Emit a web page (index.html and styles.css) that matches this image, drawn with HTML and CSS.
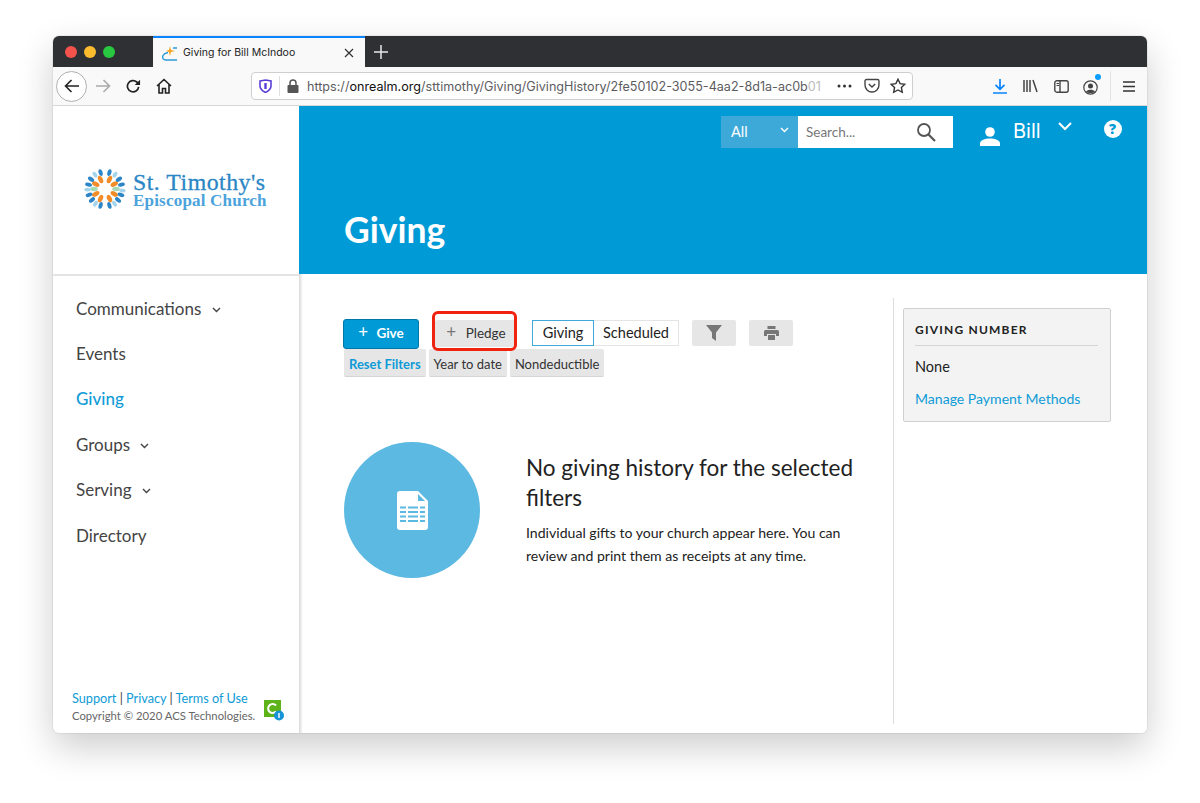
FILE: index.html
```html
<!DOCTYPE html>
<html lang="en">
<head>
    <meta charset="UTF-8">
    <title>Giving for Bill McIndoo</title>
    <link rel="stylesheet" href="styles.css">
</head>
<body>
<div class="window">
    <!-- tab strip -->
    <div class="tabstrip">
        <div class="lights"><i class="red"></i><i class="yellow"></i><i class="green"></i></div>
        <div class="tab">
            <svg class="favicon" width="16" height="16" viewBox="0 0 16 16"><path d="M15 15H4C1 15 0 12.500 1 10.500 1.800 9 3.500 8 6 7.500" fill="none" stroke="#2a9ad6" stroke-width="1.400"/><path d="M8 1l1 4 4 1-4 1-1 4-1-4-3-1 3-1z" fill="#f5a21b"/><path d="M11 3h4" stroke="#2a9ad6" stroke-width="1.400"/></svg>
            <span class="tab-title">Giving for Bill McIndoo</span>
            <svg class="tab-close" width="10" height="10" viewBox="0 0 10 10"><path d="M1 1l8 8M9 1L1 9" stroke="#333" stroke-width="1.200"/></svg>
        </div>
        <svg class="newtab" width="14" height="14" viewBox="0 0 14 14"><path d="M7 0v14M0 7h14" stroke="#e8e8e8" stroke-width="1.500"/></svg>
    </div>

    <!-- browser toolbar -->
    <div class="toolbar">
        <div class="back"><svg width="16" height="16" viewBox="0 0 16 16"><path d="M15 8H1.500M7.500 2L1.500 8l6 6" fill="none" stroke="#222" stroke-width="1.600"/></svg></div>
        <svg class="tb-forward" width="16" height="16" viewBox="0 0 16 16"><path d="M1 8h13.500M8.500 2l6 6-6 6" fill="none" stroke="#aaa" stroke-width="1.600"/></svg>
        <svg class="tb-reload" width="15" height="15" viewBox="0 0 16 16"><path d="M13.500 8.500A6 6 0 1 1 11.500 3.200L14 5" fill="none" stroke="#222" stroke-width="1.800"/><path d="M15 .8v5.700H9.300z" fill="#222"/></svg>
        <svg class="tb-home" width="16" height="16" viewBox="0 0 16 16"><path d="M1 8l7-6.500L15 8M3 6.500V15h3.500v-4.500h3V15H13V6.500" fill="none" stroke="#222" stroke-width="1.600"/></svg>
        <div class="urlbar">
            <svg class="shield" width="13" height="14" viewBox="0 0 13 14"><path d="M1 2l5.500-1L12 2v5c0 3-2.500 5-5.500 6.500C3.500 12 1 10 1 7z" fill="#fff" stroke="#5b3fd6" stroke-width="1.600"/><path d="M6.500 4v6" stroke="#5b3fd6" stroke-width="2.400"/></svg>
            <span class="url-sep"></span>
            <svg class="lock" width="12" height="14" viewBox="0 0 12 14"><path d="M3 6V4a3 3 0 0 1 6 0v2" fill="none" stroke="#555" stroke-width="1.500"/><rect x="0.500" y="6" width="11" height="8" rx="1" fill="#555"/></svg>
            <span class="url"><span class="dim">https://</span>onrealm.org<span class="dim">/sttimothy/Giving/GivingHistory/2fe50102-3055-4aa2-8d1a-ac0b<span class="fade">01</span></span></span>
            <svg class="dots" width="15" height="4" viewBox="0 0 15 4"><circle cx="2" cy="2" r="1.500" fill="#333"/><circle cx="7.500" cy="2" r="1.500" fill="#333"/><circle cx="13" cy="2" r="1.500" fill="#333"/></svg>
            <svg class="pocket" width="16" height="16" viewBox="0 0 16 16"><path d="M1 3a1.500 1.500 0 0 1 1.500-1.500h11A1.500 1.500 0 0 1 15 3v4a7 7 0 0 1-14 0z" fill="none" stroke="#444" stroke-width="1.400"/><path d="M4.800 6L8 9l3.200-3" fill="none" stroke="#444" stroke-width="1.500"/></svg>
            <svg class="star" width="16" height="16" viewBox="0 0 16 16"><path d="M8 1.200l2.100 4.400 4.800.6-3.500 3.300.9 4.800L8 12l-4.300 2.300.9-4.800L1.100 6.200l4.800-.6z" fill="none" stroke="#333" stroke-width="1.400"/></svg>
        </div>
        <div class="tb-right">
            <svg width="14" height="15" viewBox="0 0 14 15"><path d="M7 0v10M2.500 5.800L7 10.300l4.500-4.500M0 14h14" fill="none" stroke="#0a84ff" stroke-width="1.700"/></svg>
            <svg width="15" height="14" viewBox="0 0 15 14"><path d="M1 1v12M4 1v12M7 1v12M10 1l4 12" fill="none" stroke="#444" stroke-width="1.500"/></svg>
            <svg width="15" height="13" viewBox="0 0 15 13"><rect x="0.800" y="0.800" width="13.400" height="11.400" rx="2" fill="none" stroke="#444" stroke-width="1.400"/><path d="M6 1v11" stroke="#444" stroke-width="1.400"/><path d="M2.500 3.500H5M2.500 5.500H5" stroke="#444"/></svg>
            <span class="account">
                <svg width="15" height="15" viewBox="0 0 15 15"><circle cx="7.500" cy="7.500" r="6.700" fill="none" stroke="#444" stroke-width="1.200"/><circle cx="7.500" cy="6" r="2.500" fill="#444"/><path d="M3 11.500c2-2.500 7-2.500 9 0-2 2-7 2-9 0z" fill="#444"/></svg>
                <i class="account-dot"></i>
            </span>
            <span class="tb-sep"></span>
            <svg width="12" height="11" viewBox="0 0 12 11"><path d="M0 1h12M0 5.500h12M0 10h12" stroke="#333" stroke-width="1.500"/></svg>
        </div>
    </div>

    <div class="app">
        <aside class="sidebar">
            <div class="logo">
                <svg class="sunburst" width="42" height="42" viewBox="-21 -21 42 42">
                    <defs>
                        <ellipse id="po" cx="0" cy="-10.500" rx="2.300" ry="4" fill="#f28c28"/>
                        <ellipse id="pb" cx="0" cy="-17" rx="2" ry="3.500" fill="#2a86c8"/>
                        <ellipse id="pl" cx="0" cy="-17.500" rx="1.900" ry="3.200" fill="#a4d3ec"/>
                        <ellipse id="pg" cx="0" cy="-11" rx="2.200" ry="3.800" fill="#a5d9b8"/>
                    </defs>
                    <use href="#po" transform="rotate(25)"/><use href="#po" transform="rotate(62)"/><use href="#po" transform="rotate(118)"/><use href="#po" transform="rotate(155)"/><use href="#po" transform="rotate(205)"/><use href="#po" transform="rotate(242)"/><use href="#po" transform="rotate(298)"/><use href="#po" transform="rotate(335)"/>
                    <use href="#pg" transform="rotate(90)"/><use href="#pg" transform="rotate(270)"/>
                    <use href="#pb" transform="rotate(15)"/><use href="#pl" transform="rotate(35)"/><use href="#pb" transform="rotate(55)"/><use href="#pb" transform="rotate(75)"/><use href="#pl" transform="rotate(95)"/><use href="#pb" transform="rotate(110)"/><use href="#pb" transform="rotate(130)"/><use href="#pl" transform="rotate(147)"/><use href="#pb" transform="rotate(165)"/><use href="#pb" transform="rotate(195)"/><use href="#pl" transform="rotate(213)"/><use href="#pb" transform="rotate(230)"/><use href="#pb" transform="rotate(250)"/><use href="#pl" transform="rotate(268)"/><use href="#pb" transform="rotate(285)"/><use href="#pb" transform="rotate(305)"/><use href="#pl" transform="rotate(325)"/><use href="#pb" transform="rotate(345)"/>
                </svg>
                <div class="logo-text">
                    <div class="logo-name">St. Timothy's</div>
                    <div class="logo-sub">Episcopal Church</div>
                </div>
            </div>
            <nav class="nav">
                <a>Communications <svg class="caret" width="9" height="6" viewBox="0 0 9 6"><path d="M1 1l3.500 3.500L8 1" fill="none" stroke="#444" stroke-width="1.400"/></svg></a>
                <a>Events</a>
                <a class="active">Giving</a>
                <a>Groups <svg class="caret" width="9" height="6" viewBox="0 0 9 6"><path d="M1 1l3.500 3.500L8 1" fill="none" stroke="#444" stroke-width="1.400"/></svg></a>
                <a>Serving <svg class="caret" width="9" height="6" viewBox="0 0 9 6"><path d="M1 1l3.500 3.500L8 1" fill="none" stroke="#444" stroke-width="1.400"/></svg></a>
                <a>Directory</a>
            </nav>
            <div class="side-footer">
                <div class="foot-text">
                    <div class="foot-links"><a>Support</a> | <a>Privacy</a> | <a>Terms of Use</a></div>
                    <div class="copyright">Copyright © 2020 ACS Technologies.</div>
                </div>
                <svg class="acs" width="20" height="22" viewBox="0 0 20 22"><rect x="0" y="0" width="17" height="17" fill="#5fb31a"/><path d="M12 5.500a4.500 4.500 0 1 0 0 6" fill="none" stroke="#fff" stroke-width="2"/><circle cx="15" cy="15.500" r="5" fill="#1793d8"/><path d="M15 13v5" stroke="#fff" stroke-width="1.400"/></svg>
            </div>
        </aside>

        <div class="content">
            <header class="banner">
                <div class="banner-top">
                    <div class="search">
                        <div class="search-scope">All <svg width="9" height="6" viewBox="0 0 9 6"><path d="M1 1l3.500 3.500L8 1" fill="none" stroke="#fff" stroke-width="1.400"/></svg></div>
                        <div class="search-box">
                            <span>Search...</span>
                            <svg width="20" height="20" viewBox="0 0 20 20"><circle cx="8" cy="8" r="6" fill="none" stroke="#555" stroke-width="1.800"/><path d="M12.500 12.500l6.500 6.500" stroke="#555" stroke-width="2.200"/></svg>
                        </div>
                    </div>
                    <svg class="user-icon" width="20" height="20" viewBox="0 0 20 20"><circle cx="10" cy="6" r="4.800" fill="#fff"/><path d="M0 20v-2.500C0 14 5 12.500 10 12.500s10 1.500 10 5V20z" fill="#fff"/></svg>
                    <span class="user-name">Bill</span>
                    <svg class="user-caret" width="14" height="9" viewBox="0 0 14 9"><path d="M1 1l6 6 6-6" fill="none" stroke="#fff" stroke-width="2"/></svg>
                    <span class="help">?</span>
                </div>
                <h1>Giving</h1>
            </header>

            <div class="body">
                <main class="main">
                    <div class="actions">
                        <button class="btn-give"><span class="plus">+</span> Give</button>
                        <div class="pledge-wrap">
                            <button class="btn-pledge"><span class="plus">+</span> Pledge</button>
                            <div class="highlight"></div>
                        </div>
                        <div class="segment">
                            <span class="seg on">Giving</span><span class="seg">Scheduled</span>
                        </div>
                        <button class="icon-btn filter-btn"><svg width="16" height="16" viewBox="0 0 16 16"><path d="M0 0h16L10 7.500V16L6 13V7.500z" fill="#777"/></svg></button>
                        <button class="icon-btn print-btn"><svg width="15" height="14" viewBox="0 0 15 14"><path d="M3.500 0h8v3h-8zM1.500 4h12A1.500 1.500 0 0 1 15 5.500V10h-3V8H3v2H0V5.500A1.500 1.500 0 0 1 1.500 4zM4 9h7v5H4z" fill="#777"/></svg></button>
                    </div>
                    <div class="chips">
                        <span class="chip reset">Reset Filters</span>
                        <span class="chip">Year to date</span>
                        <span class="chip">Nondeductible</span>
                    </div>
                    <div class="empty">
                        <div class="circle">
                            <svg width="31" height="39" viewBox="0 0 31 39"><path d="M3 0h18l10 10v26a3 3 0 0 1-3 3H3a3 3 0 0 1-3-3V3a3 3 0 0 1 3-3z" fill="#fff"/><path d="M21 3v7h7z" fill="#5cb9e2"/><path d="M3 16.500h6M11 16.500h10M23 16.500h5M3 21h6M11 21h10M23 21h5M3 25.500h6M11 25.500h10M23 25.500h5M3 30h6M11 30h10M23 30h5" stroke="#5cb9e2" stroke-width="2.200"/></svg>
                        </div>
                        <div class="empty-text">
                            <h2>No giving history for the selected filters</h2>
                            <p>Individual gifts to your church appear here. You can review and print them as receipts at any time.</p>
                        </div>
                    </div>
                </main>
                <aside class="right">
                    <div class="card">
                        <h3>GIVING NUMBER</h3>
                        <div class="card-val">None</div>
                        <a class="card-link">Manage Payment Methods</a>
                    </div>
                </aside>
            </div>
        </div>
    </div>
</div>
</body>
</html>
```

FILE: styles.css
```css
html, body {
    height: 100%;
}
body {
    margin: 0;
    padding: 36px 53px 0;
    box-sizing: border-box;
    background-color: #fff;
    font-family: Lato, "Liberation Sans", sans-serif;
    color: #222;
}
button {
    font-family: Lato, "Liberation Sans", sans-serif;
    border: 0;
    padding: 0;
}
.window {
    width: 1094px;
    height: 697px;
    border-radius: 6px;
    overflow: hidden;
    box-shadow: 0 0 0 1px rgba(0, 0, 0, .05), 0 14px 36px rgba(0, 0, 0, .2);
    background-color: #fff;
    display: flex;
    flex-direction: column;
}

/* browser chrome */
.tabstrip {
    height: 31px;
    background-color: #2f3033;
    display: flex;
    align-items: center;
    flex-shrink: 0;
}
.lights {
    width: 100px;
    padding-left: 12px;
    box-sizing: border-box;
    display: flex;
    gap: 7px;
}
.lights i {
    width: 12px;
    height: 12px;
    border-radius: 50%;
}
.red { background-color: #f4524d; }
.yellow { background-color: #fdbb2e; }
.green { background-color: #28c840; }
.tab {
    width: 212px;
    height: 31px;
    box-sizing: border-box;
    border-top: 2px solid #0a84ff;
    background-color: #f9f9fa;
    display: flex;
    align-items: center;
    padding: 0 11px 0 9px;
}
.tab-title {
    font-family: Inter, "Liberation Sans", sans-serif;
    font-size: 10.500px;
    margin-left: 5px;
    flex: 1;
}
.newtab {
    margin-left: 9px;
}
.toolbar {
    height: 39px;
    box-sizing: border-box;
    background-color: #f9f9fa;
    border-bottom: 1px solid #d8d8da;
    display: flex;
    align-items: center;
    flex-shrink: 0;
}
.back {
    width: 31px;
    height: 31px;
    box-sizing: border-box;
    margin-left: 3px;
    border: 1px solid #b0b0b0;
    border-radius: 50%;
    background-color: #fff;
    display: flex;
    align-items: center;
    justify-content: center;
}
.tb-forward { margin-left: 8px; }
.tb-reload { margin-left: 15px; }
.tb-home { margin-left: 15px; }
.urlbar {
    width: 662px;
    height: 28px;
    box-sizing: border-box;
    margin-left: 79px;
    background-color: #fff;
    border: 1px solid #cfcfd1;
    border-radius: 4px;
    display: flex;
    align-items: center;
    padding: 0 6px 0 7px;
}
.shield { flex-shrink: 0; }
.url-sep {
    width: 1px;
    height: 20px;
    background-color: #e0e0e0;
    margin: 0 7px;
}
.url {
    font-family: Inter, "Liberation Sans", sans-serif;
    font-size: 12.600px;
    margin-left: 8px;
    color: #111;
    white-space: nowrap;
    width: 524px;
}
.dim { color: #5c5c5f; }
.fade { color: #bbb; }
.dots {
    margin-left: 7px;
    flex-shrink: 0;
}
.pocket { margin-left: 12px; }
.star { margin-left: 10px; }
.tb-right {
    display: flex;
    align-items: center;
    margin-left: 80px;
    gap: 16px;
}
.account {
    position: relative;
    height: 15px;
    margin-left: -2px;
}
.account-dot {
    position: absolute;
    right: -3px;
    top: -5px;
    width: 6px;
    height: 6px;
    border-radius: 50%;
    background-color: #0a9dff;
}
.tb-sep {
    width: 1px;
    height: 30px;
    background-color: #e2e2e2;
    margin-left: -4px;
    margin-right: -4px;
}

/* app */
.app {
    flex: 1;
    display: flex;
    min-height: 0;
}
.sidebar {
    width: 246px;
    box-sizing: border-box;
    display: flex;
    flex-direction: column;
    flex-shrink: 0;
}
.logo {
    height: 170px;
    box-sizing: border-box;
    border-bottom: 2px solid #e4e4e4;
    display: flex;
    align-items: center;
    padding: 0 0 2px 31px;
}
.sunburst { flex-shrink: 0; }
.logo-text {
    margin-left: 7px;
    padding-top: 2px;
    color: #2b86c5;
    font-family: "Liberation Serif", serif;
    white-space: nowrap;
}
.logo-name {
    font-size: 23.800px;
    line-height: 21px;
    letter-spacing: .5px;
    -webkit-text-stroke: .3px #2b86c5;
}
.logo-sub {
    font-size: 17px;
    line-height: 16px;
    font-weight: bold;
    color: #4ca3dc;
    letter-spacing: .2px;
}
.nav {
    display: flex;
    flex-direction: column;
    padding: 9.500px 0 0 23px;
    flex: 1;
}
.nav a {
    font-size: 17px;
    line-height: 45.400px;
    color: #444;
}
.nav a.active {
    color: #0f9bd7;
    font-weight: 500;
}
.caret {
    margin-left: 6px;
    vertical-align: 2px;
}
.side-footer {
    display: flex;
    align-items: flex-end;
    padding: 0 0 8px 19px;
}
.foot-links {
    font-size: 12.700px;
    line-height: 18px;
    color: #444;
}
.foot-links a { color: #0f9bd7; }
.copyright {
    font-size: 11.300px;
    line-height: 18px;
    color: #666;
}
.acs {
    margin-left: 9px;
    margin-bottom: 3px;
}
.content {
    flex: 1;
    display: flex;
    flex-direction: column;
    min-width: 0;
}
.banner {
    height: 168px;
    box-sizing: border-box;
    background-color: #009bd6;
    color: #fff;
    display: flex;
    flex-direction: column;
}
.banner-top {
    display: flex;
    align-items: flex-start;
    padding: 10px 0 0 422px;
}
.search {
    display: flex;
    height: 32px;
}
.search-scope {
    width: 77px;
    box-sizing: border-box;
    background-color: #3da9d9;
    font-size: 14.500px;
    line-height: 32px;
    padding-left: 10px;
}
.search-scope svg {
    margin-left: 29px;
    vertical-align: 4px;
}
.search-box {
    width: 155px;
    box-sizing: border-box;
    background-color: #fff;
    color: #777;
    font-size: 13.500px;
    display: flex;
    align-items: center;
    justify-content: space-between;
    padding: 0 17px 0 8px;
}
.user-icon {
    margin: 10px 0 0 27px;
}
.user-name {
    font-family: Inter, "Liberation Sans", sans-serif;
    font-size: 20px;
    line-height: 30px;
    margin-left: 13px;
}
.user-caret {
    margin: 6px 0 0 17px;
}
.help {
    width: 18px;
    height: 18px;
    margin: 4px 0 0 32px;
    border-radius: 50%;
    background-color: #fff;
    color: #009bd6;
    font-family: "Open Sans", sans-serif;
    font-weight: 800;
    font-size: 14px;
    line-height: 18px;
    text-align: center;
}
h1 {
    margin: 60px 0 0 45px;
    font-size: 35.500px;
    line-height: 44px;
    font-weight: 700;
}
.body {
    flex: 1;
    display: flex;
    min-height: 0;
    background: linear-gradient(to right, #d8d8d8, #ececec 2px, #f6f6f6 3px, #fff 4px);
}
.main {
    width: 595px;
    box-sizing: border-box;
    margin: 24px 0 9px;
    padding: 21px 0 0 44px;
    border-right: 1px solid #ddd;
}
.actions {
    display: flex;
    align-items: flex-start;
    height: 29px;
}
.btn-give {
    width: 76px;
    height: 30px;
    box-sizing: border-box;
    background-color: #009bd6;
    border: 1px solid #0077a8;
    border-radius: 3px;
    color: #fff;
    font-size: 13.500px;
    font-weight: 700;
    padding-bottom: 2px;
}
.plus {
    font-weight: 400;
    font-size: 17px;
    margin-right: 5px;
    line-height: 14px;
}
.pledge-wrap {
    position: relative;
    margin-left: 16px;
}
.btn-pledge {
    display: block;
    width: 82px;
    height: 27px;
    margin-top: 1px;
    background-color: #e6e6e6;
    border-radius: 2px;
    color: #333;
    font-size: 13.500px;
    padding-bottom: 2px;
}
.btn-pledge .plus { color: #777; margin-right: 6px; }
.highlight {
    position: absolute;
    left: -3px;
    top: -8px;
    width: 85px;
    height: 40px;
    box-sizing: border-box;
    border: 3px solid #f0230f;
    border-radius: 6px;
}
.segment {
    display: flex;
    margin: 1px 0 0 15px;
    height: 26px;
}
.seg {
    box-sizing: border-box;
    height: 26px;
    font-size: 14.500px;
    line-height: 24px;
    border: 1px solid #e4e4e4;
    border-left: 0;
    width: 85px;
    text-align: center;
}
.seg.on {
    border: 1px solid #3fa9dc;
    width: 62px;
}
.icon-btn {
    width: 44px;
    height: 26px;
    margin-top: 1px;
    background-color: #e6e6e6;
    border-radius: 2px;
    display: flex;
    align-items: center;
    justify-content: center;
}
.filter-btn { margin-left: 13px; }
.print-btn { margin-left: 13px; }
.chips {
    display: flex;
    gap: 3px;
    margin: 1px 0 0 1px;
}
.chip {
    height: 28px;
    box-sizing: border-box;
    background-color: #e6e6e6;
    border-bottom: 1px solid #d4d4d4;
    border-radius: 2px;
    font-size: 13px;
    line-height: 30px;
    padding: 0 5px;
    color: #333;
}
.chip.reset {
    color: #0f9bd7;
    font-weight: 700;
    font-size: 13px;
}
.empty {
    display: flex;
    margin: 65px 0 0 1px;
}
.circle {
    width: 136px;
    height: 136px;
    border-radius: 50%;
    background-color: #5cb9e2;
    display: flex;
    align-items: center;
    justify-content: center;
    flex-shrink: 0;
}
.empty-text {
    margin-left: 46px;
    width: 330px;
}
h2 {
    margin: 11px 0 0;
    font-size: 22.500px;
    line-height: 30px;
    font-weight: 400;
    color: #222;
}
.empty-text p {
    margin: 8px 0 0;
    font-size: 14.100px;
    line-height: 23px;
    color: #222;
}
.right {
    flex: 1;
    padding: 34px 36px 0 9px;
}
.card {
    box-sizing: border-box;
    height: 114px;
    background-color: #f3f3f3;
    border: 1px solid #d0d0d0;
    border-radius: 2px;
    padding: 13px 12px 0 11px;
}
h3 {
    margin: 0;
    font-size: 12px;
    line-height: 16px;
    letter-spacing: 1.200px;
    font-weight: 700;
    color: #222;
    padding-bottom: 7px;
    border-bottom: 1px solid #d4d4d4;
}
.card-val {
    font-size: 14.500px;
    line-height: 20px;
    margin-top: 11px;
}
.card-link {
    display: block;
    font-size: 14.050px;
    line-height: 20px;
    margin-top: 12px;
    color: #0f9bd7;
}
```
